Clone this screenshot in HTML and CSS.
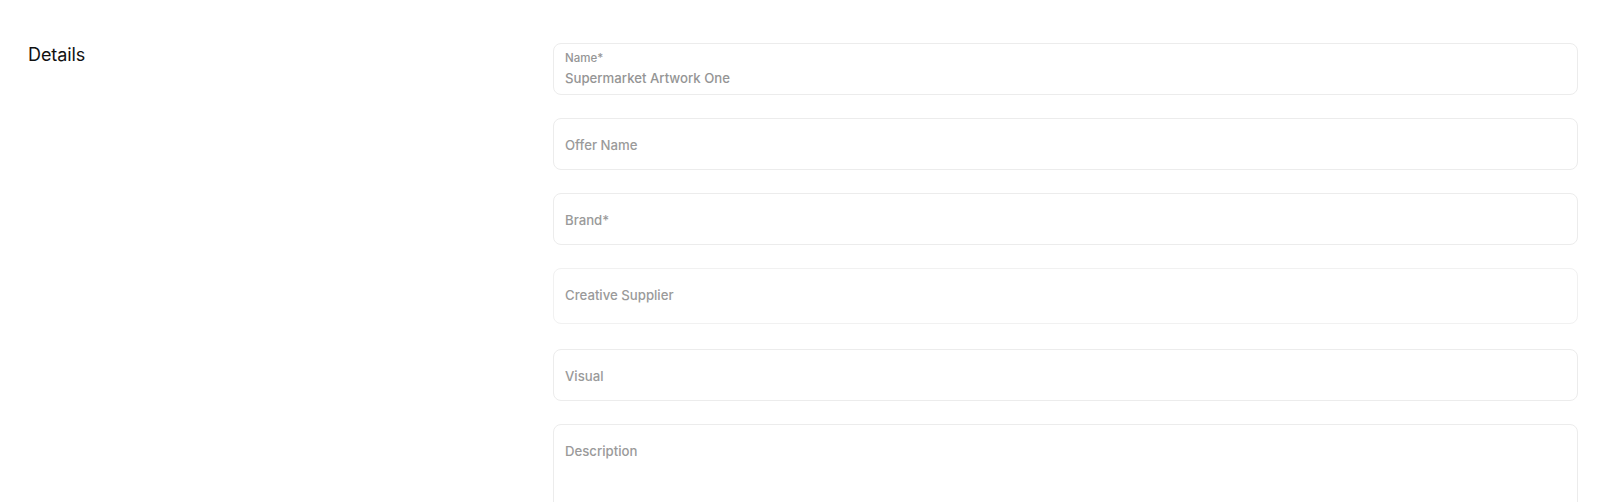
FILE: index.html
```html
<!DOCTYPE html>
<html lang="en">
<head>
<meta charset="utf-8">
<title>Details</title>
<link rel="stylesheet" href="styles.css">
</head>
<body>
<main class="section">
  <h2 class="section-title">Details</h2>
  <form class="fields">
    <div class="field field-floating">
      <label class="field-label" for="name">Name*</label>
      <input class="field-input" id="name" type="text" value="Supermarket Artwork One">
    </div>
    <div class="field">
      <input class="field-input" type="text" placeholder="Offer Name">
    </div>
    <div class="field">
      <input class="field-input" type="text" placeholder="Brand*">
    </div>
    <div class="field field-select">
      <span class="field-placeholder">Creative Supplier</span>
    </div>
    <div class="field">
      <input class="field-input" type="text" placeholder="Visual">
    </div>
    <div class="field field-area">
      <textarea class="field-textarea" placeholder="Description"></textarea>
    </div>
  </form>
</main>
</body>
</html>
```

FILE: styles.css
```css
* { box-sizing: border-box; }

html, body {
  margin: 0;
  background: #ffffff;
  font-family: Inter, "Noto Sans", "Liberation Sans", sans-serif;
  color: #111111;
}

.section {
  display: grid;
  grid-template-columns: 525px 1fr;
  padding: 43px 22px 0 28px;
}

.section-title {
  margin: 0;
  font-size: 18px;
  line-height: 24px;
  font-weight: 400;
  color: #111111;
  letter-spacing: -0.1px;
}

.fields {
  display: flex;
  flex-direction: column;
  gap: 23px;
  margin: 0;
}

.field {
  height: 52px;
  border: 1px solid #ececec;
  border-radius: 8px;
  background: #ffffff;
  display: flex;
  align-items: center;
  padding: 2px 11px 0;
}

.field-floating {
  flex-direction: column;
  align-items: stretch;
  justify-content: flex-start;
  padding-top: 7px;
}

.field-label {
  font-size: 11.5px;
  line-height: 14px;
  font-weight: 500;
  color: #959595;
  margin-bottom: 3px;
}

.field-input {
  border: 0;
  outline: 0;
  padding: 0;
  margin: 0;
  width: 100%;
  background: transparent;
  font-family: inherit;
  font-size: 13.2px;
  font-weight: 500;
  line-height: 20px;
  height: 20px;
  color: #959595;
}

.field-input::placeholder,
.field-textarea::placeholder {
  color: #9a9a9a;
  opacity: 1;
}

.field-select {
  height: 56px;
  margin-bottom: 2px;
  padding: 0 11px 2px;
  border-color: #f1f1f1;
}

.field-placeholder {
  font-size: 13.2px;
  font-weight: 500;
  line-height: 20px;
  color: #9a9a9a;
}

.field-area {
  height: 110px;
  align-items: stretch;
  padding: 0;
}

.field-textarea {
  border: 0;
  outline: 0;
  resize: none;
  width: 100%;
  height: 100%;
  background: transparent;
  padding: 16px 11px 12px;
  font-family: inherit;
  font-size: 13.2px;
  font-weight: 500;
  line-height: 20px;
  color: #959595;
}
```
